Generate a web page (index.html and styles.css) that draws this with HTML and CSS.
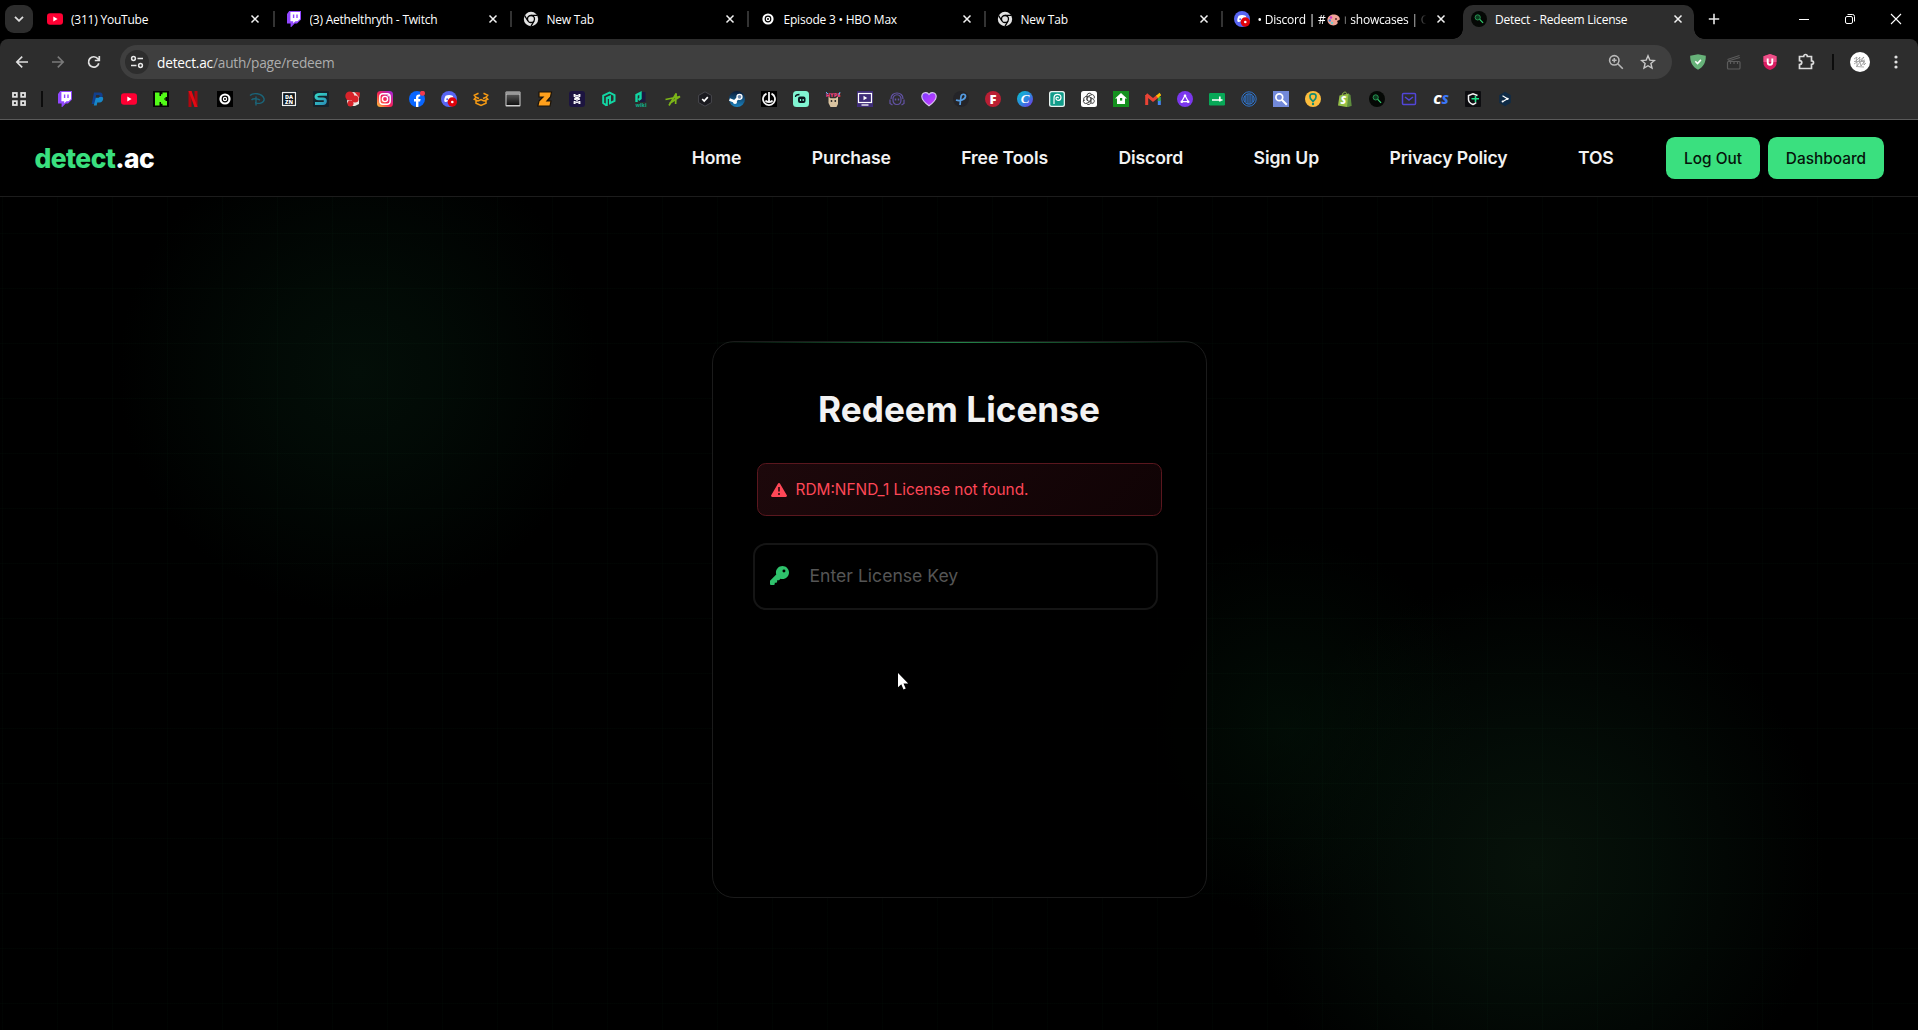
FILE: index.html
```html
<!DOCTYPE html>
<html lang="en">
<head>
    <meta charset="UTF-8">
    <meta name="viewport" content="width=device-width, initial-scale=1.0">
    <title>Detect - Redeem License</title>
    <link rel="stylesheet" href="styles.css">
</head>
<body>
    <!-- shared icons -->
    <svg class="sprite" width="0" height="0">
        <linearGradient id="g-insta" x1="0" y1="1" x2="1" y2="0"><stop offset="0" stop-color="#ffc93c"/><stop offset=".45" stop-color="#f9234f"/><stop offset="1" stop-color="#9b25e8"/></linearGradient>
        <linearGradient id="g-canva" x1="0" y1="0" x2="1" y2="1"><stop offset="0" stop-color="#06c3cc"/><stop offset=".55" stop-color="#2f86e0"/><stop offset="1" stop-color="#7d2ae8"/></linearGradient>
        <linearGradient id="g-heart" x1="0" y1="0" x2="1" y2="1"><stop offset="0" stop-color="#7a3cff"/><stop offset="1" stop-color="#d43cff"/></linearGradient>
        <linearGradient id="g-steam" x1="0" y1="0" x2="0" y2="1"><stop offset="0" stop-color="#0a1a36"/><stop offset="1" stop-color="#1a83c0"/></linearGradient>
        <linearGradient id="g-s" x1="0" y1="0" x2="1" y2="1"><stop offset="0" stop-color="#35d6c6"/><stop offset="1" stop-color="#2a8fb8"/></linearGradient>
        <linearGradient id="g-win" x1="0" y1="0" x2="0" y2="1"><stop offset="0" stop-color="#555"/><stop offset="1" stop-color="#111"/></linearGradient>
        <symbol id="i-x" viewBox="0 0 10 10"><path d="M1.5 1.5l7 7m0-7l-7 7" stroke="#f2f2f2" stroke-width="1.5" fill="none"/></symbol>
        <symbol id="i-youtube" viewBox="0 0 16 16"><rect y="2.2" width="16" height="11.6" rx="3" fill="#ff0033"/><path d="M6.3 5.6v4.8L10.6 8z" fill="#fff"/></symbol>
        <symbol id="i-twitch" viewBox="0 0 16 16"><path d="M3.2 0H15v8.5l-4 3.9H8.7L5.3 16H4.6v-3.4H1V3z" fill="#9146ff"/><path d="M4.4 1h9.6v7l-2.4 2.3H9.4l-2.2 2v-2H4.4z" fill="#fff"/><path d="M7.6 3.6v3.4m3.4-3.4v3.4" stroke="#9146ff" stroke-width="1.4"/></symbol>
        <symbol id="i-chrome" viewBox="0 0 16 16"><circle cx="8" cy="8" r="7.2" fill="#e3e3e3"/><circle cx="8" cy="8" r="3.5" fill="#e3e3e3" stroke="#000" stroke-width="1.3"/><path d="M8 4.3h6.4M4.9 10L1.6 4.5M11.1 10l-3.2 5.3" stroke="#000" stroke-width="1.3" fill="none"/></symbol>
        <symbol id="i-hbo" viewBox="0 0 16 16"><circle cx="8" cy="8" r="5.6" fill="#fff"/><circle cx="8" cy="8" r="2.8" fill="#fff" stroke="#000" stroke-width="1.200"/><circle cx="8" cy="8" r="1" fill="#000"/></symbol>
        <symbol id="i-discord" viewBox="0 0 16 16"><circle cx="8" cy="8" r="8" fill="#5865f2"/><path d="M4.6 4.8C6.6 3.8 9.6 3.8 11.6 4.8c1.2 2 1.5 4 1.3 5.4-1.6 1.2-2.4 1-2.8.4H6c-.5.7-1.5.7-2.7-.4-.2-1.6.2-3.6 1.3-5.4z" fill="#fff"/><circle cx="6.2" cy="8.2" r="1" fill="#5865f2"/><circle cx="11.3" cy="11" r="4.7" fill="#e0020a"/><circle cx="11.3" cy="11" r="1.3" fill="#fff"/></symbol>
        <symbol id="i-detect" viewBox="0 0 16 16"><circle cx="8" cy="8" r="8" fill="#050805"/><circle cx="6.7" cy="6.4" r="2.6" fill="#0c3b20" stroke="#2a9d57" stroke-width=".9"/><path d="M8.7 8.4l3.4 3.4" stroke="#35d673" stroke-width="1.2"/></symbol>
    </svg>

    <div class="tabstrip">
        <div class="tabsearch"><svg width="10" height="6"><path d="M1 .8l4 4 4-4" fill="none" stroke="#ddd" stroke-width="1.8"/></svg></div>
        <ul class="tabs">
            <li><svg class="fav"><use href="#i-youtube"/></svg><span class="name">(311) YouTube</span><svg class="close"><use href="#i-x"/></svg></li>
            <li><svg class="fav"><use href="#i-twitch"/></svg><span class="name">(3) Aethelthryth - Twitch</span><svg class="close"><use href="#i-x"/></svg></li>
            <li><svg class="fav"><use href="#i-chrome"/></svg><span class="name">New Tab</span><svg class="close"><use href="#i-x"/></svg></li>
            <li><svg class="fav"><use href="#i-hbo"/></svg><span class="name">Episode 3 • HBO Max</span><svg class="close"><use href="#i-x"/></svg></li>
            <li><svg class="fav"><use href="#i-chrome"/></svg><span class="name">New Tab</span><svg class="close"><use href="#i-x"/></svg></li>
            <li class="nosep"><svg class="fav"><use href="#i-discord"/></svg><span class="name fade">• Discord | #<svg class="palette" width="13" height="12" viewBox="0 0 13 12"><path d="M6.5.5C10 .5 12.800 2.600 12.800 5c0 2-2.600.8-2.600 2.600 1.600 1.800-.7 3.800-3.700 3.800C3 11.400.4 9 .4 6S3 .5 6.500.5z" fill="#f2a497"/><circle cx="4" cy="3.500" r="1.200" fill="#c93cc8"/><circle cx="2.800" cy="6.500" r="1.200" fill="#3f8de0"/><circle cx="5" cy="9" r="1.200" fill="#7cc"/><circle cx="9" cy="5" r="1" fill="#5a2a2a"/></svg><small>︱</small>showcases | C</span><svg class="close"><use href="#i-x"/></svg></li>
            <li class="active"><svg class="fav"><use href="#i-detect"/></svg><span class="name">Detect - Redeem License</span><svg class="close"><use href="#i-x"/></svg></li>
        </ul>
        <svg class="newtab" width="12" height="12"><path d="M6 .8v10.400M.8 6h10.400" stroke="#e8e8e8" stroke-width="1.600"/></svg>
        <div class="winbtns">
            <svg width="12" height="12"><path d="M1 6.500h10" stroke="#fff"/></svg>
            <svg width="12" height="12" fill="none" stroke="#fff"><rect x="1.500" y="3.500" width="7" height="7" rx="1.500"/><path d="M3.500 1.500h5a2 2 0 0 1 2 2v5"/></svg>
            <svg width="12" height="12"><path d="M1 1l10 10M11 1L1 11" stroke="#fff" stroke-width="1.100"/></svg>
        </div>
    </div>

    <div class="toolbar">
        <div class="arrows">
            <svg width="16" height="16" fill="none" stroke="#e0e0e0" stroke-width="1.600"><path d="M14 8H3M8.200 2.600L2.800 8l5.400 5.400"/></svg>
            <svg width="16" height="16" fill="none" stroke="#7a7a7a" stroke-width="1.600"><path d="M2 8h11M7.800 2.600L13.200 8l-5.400 5.400"/></svg>
            <svg width="16" height="16" fill="none" stroke="#e0e0e0" stroke-width="1.700"><path d="M12.800 9.200A5.200 5.200 0 1 1 11.900 4.800L13 6M13.300 2v4.500H8.800"/></svg>
        </div>
        <div class="omnibox">
            <div class="siteinfo"><svg width="14" height="14" fill="none" stroke="#e8e8e8" stroke-width="1.500"><circle cx="3.500" cy="3.500" r="1.900"/><path d="M7.500 3.500H13M1 10.500h5.500"/><circle cx="10.500" cy="10.500" r="1.900"/></svg></div>
            <p class="url">detect.ac<span>/auth/page/redeem</span></p>
            <svg class="zoomicon" width="16" height="16" fill="none" stroke="#b8b8b8" stroke-width="1.600"><circle cx="6.300" cy="6.300" r="4.700"/><path d="M9.800 9.800l5 5M6.300 4v4.600M4 6.300h4.600"/></svg>
            <svg width="16" height="16" fill="none" stroke="#c8c8c8" stroke-width="1.400"><path d="M8 1.800l1.800 4.300 4.600.4-3.500 3 1.100 4.600L8 11.700l-4 2.400 1.100-4.600-3.500-3 4.600-.4z"/></svg>
        </div>
        <div class="exts">
            <svg width="16" height="16"><path d="M8 .2l7.800 1.600c.2 6-2 11-7.800 14C2.200 12.800 0 7.800.2 1.800z" fill="#67b279"/><path d="M5.300 7.300l2.200 2.200 3.400-3.600" fill="none" stroke="#fff" stroke-width="1.600"/></svg>
            <svg width="16" height="16" fill="none" stroke="#5c5c5c" stroke-width="1.200"><rect x="1.500" y="7.500" width="12.500" height="7.500" rx="1"/><path d="M1.500 5.500L13.500 1.500M2 7l12-3.500M4.500 8v2M8 8v2M11.500 8v2"/></svg>
            <svg width="16" height="16"><path d="M8 0l6.500 2.300v7.200c0 3-3 5.300-6.500 6.500-3.500-1.200-6.500-3.500-6.500-6.500V2.300z" fill="#d81b60"/><path d="M8 0l6.500 2.300V8h-13V2.300z" fill="#ee4f88"/><path d="M5.700 4.500v3.700c0 3.400 4.600 3.400 4.600 0V4.500" fill="none" stroke="#fff" stroke-width="1.900"/></svg>
            <svg width="18" height="18" fill="none" stroke="#dcdcdc" stroke-width="1.700"><path d="M2.500 3.500h4.200c0-2.700 3.600-2.700 3.600 0h4.200v4.300c2.700 0 2.700 3.600 0 3.600v4.100h-12v-3.900c3 0 3-4 0-4z"/></svg>
            <i class="bar"></i>
            <svg width="20" height="20"><circle cx="10" cy="10" r="10" fill="#fff"/><path d="M4 7l3-2-1 4 4-4-1 4 5-4-3 4 4-1M4 12l3-2 0 4 3-4 1 4 3-4 0 3 2-2M4 9.500h11M6 14.500l8 .5" fill="none" stroke="#888" stroke-width=".7"/></svg>
            <svg class="dots" width="4" height="14" fill="#e0e0e0"><circle cx="2" cy="2" r="1.600"/><circle cx="2" cy="7" r="1.600"/><circle cx="2" cy="12" r="1.600"/></svg>
        </div>
    </div>

    <div class="bookmarks">
        <svg class="apps" fill="none" stroke="#e3e3e3" stroke-width="1.800"><rect x="2" y="2" width="3.800" height="3.800"/><rect x="10.200" y="2" width="3.800" height="3.800"/><rect x="2" y="10.200" width="3.800" height="3.800"/><rect x="10.200" y="10.200" width="3.800" height="3.800"/></svg>
        <i class="bar"></i>
        <svg><use href="#i-twitch"/></svg>
        <svg><path d="M5 1.500h5.500c3 0 3.600 2 2.900 4.300C12.700 8.500 11 9.500 8.500 9.500H6.700L6 13H2.700z" fill="#123f8c"/><path d="M7 6h6.500c1 1.200.8 2.200.2 3.500-.8 1.800-2.300 2-4.600 2H8.300l-.6 3H4.800z" fill="#1591d8" opacity=".9"/><path d="M7.200 4h2.500c1.500 0 1.500 2.800-.8 2.800H6.700z" fill="#2d2d2d"/></svg>
        <svg><use href="#i-youtube"/></svg>
        <svg><rect width="16" height="16" fill="#050505"/><path d="M2 1.500h4.500V5H8V3.300h1.500V1.500H14V6h-1.500v1.500H11v1h1.500V10H14v4.500H9.500v-1.800H8V11H6.500v3.500H2z" fill="#53fc18"/></svg>
        <svg><path d="M3.500 0h3v16h-3zM9.500 0h3v16h-3z" fill="#b1060f"/><path d="M3.500 0h3l6 16h-3z" fill="#e50914"/></svg>
        <svg><rect width="16" height="16" fill="#000"/><use href="#i-hbo" width="16" height="16"/></svg>
        <svg fill="none" stroke="#1b6478" stroke-width="1.400"><path d="M1 4.500C4 1.500 13 2 15 7.500c1 4.500-5 5.500-9 4.500M7 5.500v9M2.500 9c1.500-1.800 6-1.500 8.500.2"/></svg>
        <svg><rect width="16" height="16" fill="#0c161c"/><rect x="1.500" y="1.500" width="13" height="13" fill="none" stroke="#f0f0f0" stroke-width="1.300"/><text x="8" y="7.600" class="ic" font-size="5.500" fill="#fff">DA</text><text x="8" y="13" class="ic" font-size="5.500" fill="#fff">ZN</text></svg>
        <svg><rect width="16" height="16" rx="1" fill="#16232c"/><path d="M14 3.300H6.500c-4.600 0-4.600 4.500-.8 4.500h4.300c3.500 0 3 4.700 0 4.700H2" fill="none" stroke="url(#g-s)" stroke-width="2.800"/></svg>
        <svg><path d="M3 2l5-1 6 1v11l-4 2H4l-2-4z" fill="#ece6e0"/><circle cx="4.800" cy="5" r="4.500" fill="#d8232a"/><circle cx="10" cy="8" r="3.600" fill="#d8232a"/><circle cx="5.500" cy="12.500" r="3" fill="#d8232a"/><path d="M9.500 1L15 1.500 14.500 7z" fill="#d8232a"/></svg>
        <svg><rect width="16" height="16" rx="3.500" fill="url(#g-insta)"/><g fill="none" stroke="#fff" stroke-width="1.400"><rect x="2.800" y="2.800" width="10.400" height="10.400" rx="3"/><circle cx="8" cy="8" r="2.600"/></g><circle cx="11.200" cy="4.800" r=".8" fill="#fff"/></svg>
        <svg><circle cx="8" cy="8" r="8" fill="#0866ff"/><path d="M7 16v-5.600H5V8h2V6.600c0-2.600 1.600-3.600 4.200-3.100v2C9.800 5.400 9.400 5.700 9.400 6.700V8h2.200l-.5 2.400H9.400V16z" fill="#fff"/><circle cx="13.500" cy="2.300" r="2.500" fill="#f23a4c"/></svg>
        <svg><use href="#i-discord"/></svg>
        <!-- open box -->
        <svg fill="none" stroke="#f59a14" stroke-width="1.500"><path d="M5.500 2.200L1.300 4.200 3 6.200 1.200 8.300 5 10M10.500 2.200l4.200 2L13 6.200l1.800 2.100L11 10M3 9.500v2.700l5 2.300 5-2.300V9.500M3 6.200l3 1.300M13 6.200l-3 1.300M5 10l3-1.500L11 10"/></svg>
        <svg><rect x=".5" y=".5" width="15" height="15" rx="1" fill="#d0d0d0"/><rect x="1" y="1" width="14" height="2" fill="#999"/><rect x="1.500" y="3.500" width="13" height="10.500" fill="url(#g-win)"/></svg>
        <svg><path d="M2 1h12.500l-1 5-3.500 4h4l-1 5H.8l1.200-5 4-4H2z" fill="#ffa01c" stroke="#1a1208" stroke-width="1.200"/></svg>
        <svg><rect width="16" height="16" rx="3" fill="#1c1440"/><g fill="none" stroke="#fff" stroke-width="1.200"><path d="M5.200 3v2.300l5.600 3.200M10.800 3v2.300L5.200 8.500M5.200 13v-2.300l5.600-3.200M10.800 13v-2.300L5.200 7.500M5.500 3.500L8 5l2.500-1.500M5.500 12.500L8 11l2.500 1.500"/></g></svg>
        <svg fill="none" stroke="#12d6a3" stroke-width="2"><path d="M5.500 14.500L2.200 12V4.700L8.500 1.500l5 2.500v6L9 12.200V5.500L5.800 7v8"/></svg>
        <svg><rect x="6.500" y="1" width="6" height="10" fill="#1c1840"/><path d="M3.500 11V4L7.500 2v5.500L5.500 9" fill="none" stroke="#12d6a3" stroke-width="2.400"/><text x="8" y="15.600" class="ic" font-size="5" fill="#12a080">wiki</text></svg>
        <svg fill="none" stroke="#7cb518" stroke-width="1.700"><path d="M.5 8.500L15 5.500 4.500 12.500M4 14.500L11.200 2.500l-.6 10.500"/></svg>
        <svg><path d="M8 .8l6.400 3.600v7.200L8 15.200l-6.400-3.600V4.400z" fill="#1b1b20" stroke="#48484e"/><path d="M5.200 8l2 2 3.600-3.800" fill="none" stroke="#fff" stroke-width="1.700"/></svg>
        <svg><circle cx="8" cy="8" r="8" fill="url(#g-steam)"/><path d="M.5 8.500L5.500 10.500 9 7" fill="none" stroke="#fff" stroke-width="2.600"/><circle cx="10.500" cy="5.800" r="2.500" fill="#6f8db0" stroke="#fff" stroke-width="1.300"/><circle cx="6" cy="11" r="2" fill="#fff"/></svg>
        <svg><rect width="16" height="16" fill="#000"/><path d="M5.500 2.600A6 6 0 1 0 10.500 2.600" fill="none" stroke="#f4f4f4" stroke-width="1.800"/><path d="M8 1v11M4.500 9.500c1 2 6 2 7 0" fill="none" stroke="#f4f4f4" stroke-width="1.800"/></svg>
        <svg><rect width="16" height="16" rx="3.500" fill="#80f5d2"/><rect x="5" y="5.500" width="7.500" height="6.500" rx="2" fill="#09161d"/><path d="M2.500 6c0-2 2-2.500 4-2.500" stroke="#09161d" stroke-width="1.300" fill="none"/><path d="M7.500 8v2M10.200 8v2" stroke="#80f5d2" stroke-width="1.200"/></svg>
        <svg><text x="8" y="5.500" class="ic" font-size="5.500" fill="#e8407c">HYPE</text><path d="M3.500 5.500l2 1.700h5l2.500-1.700V13l-1.500 3h-6L3.500 12z" fill="#d9c3a0"/><circle cx="6.500" cy="10" r=".9" fill="#222"/><circle cx="10.300" cy="10" r=".9" fill="#222"/><path d="M1 1l2 2M15 1l-1 3" stroke="#5db8f0"/></svg>
        <svg><rect width="16" height="16" fill="#3f2d78"/><rect x="1.500" y="2.500" width="13" height="9" fill="none" stroke="#fff" stroke-width="1.200"/><path d="M6.500 4.800v4.400L10.200 7z" fill="#fff"/><path d="M4.500 14h7" stroke="#fff" stroke-width="1.300"/></svg>
        <svg fill="none" stroke="#6353a6" stroke-width="1.200"><path d="M2 8C1.500 0 14.500 0 14 8M4 9c-1-7 9-7 8 0 0 6-8 6-8 0zM1 8.500v4l2.500 1.500M15 8.500v4l-2.500 1.500"/><path d="M6.500 7.500v2M9.500 7.500v2" stroke-width="1.500"/></svg>
        <svg><path d="M8 14.800C3.500 11.500.8 9 .8 5.500.8 1.500 6 .3 8 3.500 10 .3 15.200 1.500 15.200 5.500c0 3.500-2.700 6-7.200 9.300z" fill="url(#g-heart)" stroke="#d8c8f0" stroke-width="1.100"/></svg>
        <svg><circle cx="8" cy="8" r="8" fill="#242428"/><path d="M3 9c4 1.500 9-.5 9.500-3.500.3-3-4-3-4.500 0L7 14" fill="none" stroke="#549be0" stroke-width="1.700"/></svg>
        <svg><circle cx="8" cy="8" r="8" fill="#ba1f33"/><text x="8" y="12.800" class="ic" font-size="13" fill="#fff">F</text></svg>
        <svg><circle cx="8" cy="8" r="8" fill="url(#g-canva)"/><text x="8" y="12" class="ic script" font-size="13" fill="#fff">C</text></svg>
        <svg><rect width="16" height="16" rx="2.500" fill="#e8f3f0"/><rect x="1.300" y="1.300" width="13.400" height="13.400" rx="1.500" fill="#119c8a"/><path d="M5 13V7c0-5 7-4.500 7-.8 0 4-5 4-5 1 0-1.500 2.500-1.500 2.500 0" fill="none" stroke="#fff" stroke-width="1.200"/></svg>
        <svg><rect width="16" height="16" rx="2.500" fill="#fff"/><g fill="none" stroke="#444" stroke-width="1"><path d="M6 6V4.500a2.500 2.500 0 0 1 4.800-.8M6 6l4-2.200a2.500 2.500 0 0 1 3 3.700M10 6.800V11a2.500 2.500 0 0 1-4.500 1.500M10 10l-4 2.200a2.500 2.500 0 0 1-3.300-3.500M6 9.200V5L3.800 6a2.500 2.500 0 0 0-.2 4M10 6.800l2.500 1.500a2.500 2.500 0 0 1-.5 4L10 12M6 6.800L8 5.600l2 1.200v2.400l-2 1.200-2-1.200z"/></g></svg>
        <svg><rect width="16" height="16" fill="#15901f"/><path d="M8 2l6 5.500h-2V13H4V7.500H2z" fill="#fff"/><rect x="7" y="7" width="2.200" height="2.600" fill="#15901f"/></svg>
        <svg><path d="M1.700 14V4" stroke="#ea4335" stroke-width="3"/><path d="M14.300 14V9" stroke="#4285f4" stroke-width="3"/><path d="M14.300 10V6" stroke="#34a853" stroke-width="3"/><path d="M1.200 3.500L8 9l5-4" fill="none" stroke="#ea4335" stroke-width="3"/><path d="M12 5.800L15.500 3" stroke="#fbbc04" stroke-width="3"/></svg>
        <svg><circle cx="8" cy="8" r="8" fill="#7b37ee"/><path d="M8 4.500l3.300 6.200H4.700z" fill="none" stroke="#fff" stroke-width="1.200"/><g fill="#fff"><circle cx="8" cy="4.800" r="1.300"/><circle cx="4.800" cy="10.700" r="1.300"/><circle cx="11.200" cy="10.700" r="1.300"/></g></svg>
        <svg><rect y="2" width="16" height="12.500" rx="1.200" fill="#07a857"/><path d="M3 9h10.500M10.800 5.500v5" stroke="#fff" stroke-width="1.700"/></svg>
        <svg fill="none" stroke="#2f74cc" stroke-width="1"><circle cx="8" cy="8" r="7.200"/><circle cx="8" cy="8" r="5.200"/><path d="M4.200 5v6M6.100 3v10M8 3v10M9.900 3v10M11.800 5v6"/></svg>
        <svg><rect width="16" height="16" fill="#7289da"/><circle cx="6.300" cy="6.300" r="3.400" fill="none" stroke="#fff" stroke-width="1.700"/><path d="M8.800 8.800l5 5" stroke="#fff" stroke-width="2"/></svg>
        <svg><circle cx="8" cy="8" r="8" fill="#fdbd3d"/><path d="M8 10.500L5.400 7.500C4 3.500 6 2.800 8 2.800s4 .7 2.600 4.700z" fill="none" stroke="#138a72" stroke-width="1.700"/><circle cx="8" cy="13" r="1.200" fill="#138a72"/></svg>
        <svg><path d="M2.500 4.500L12 2.500l1.800 12.300L9.500 16 1 14.500z" fill="#95bf47"/><path d="M11.500 3l2 1 1.200 11L10 16z" fill="#5e8e3e"/><path d="M5 4.500C5.500 1 9.500-.5 9.800 3.500" fill="none" stroke="#95bf47"/><text x="6.500" y="12.800" class="ic it" font-size="10.500" fill="#fff">S</text></svg>
        <svg><use href="#i-detect"/></svg>
        <svg fill="none" stroke="#5246d8" stroke-width="1.500"><rect x="1.500" y="2.500" width="13" height="11" rx="1"/><path d="M4 6l4 3 4-3"/></svg>
        <svg><text x="4.300" y="12.800" class="ic it" font-size="13" fill="#fff">C</text><text x="12" y="12.800" class="ic it" font-size="13" fill="#3b76f6">S</text></svg>
        <svg><rect width="16" height="16" rx="1" fill="#0d0d10"/><path d="M12.500 4.500L8 2.800 3.500 4.500v4c0 2.500 2 4 4.500 5 1.500-.6 2.500-1.300 3.200-2" fill="none" stroke="#f4f4f4" stroke-width="1.500"/><path d="M6.500 7.800H14M10.500 5v6" stroke="#20e58c" stroke-width="1.600"/></svg>
        <svg><path d="M8 .8l5.800 3.500v7.400L8 15.200l-5.800-3.500V4.300z" fill="#0f2b46"/><path d="M5.500 4.800L10.500 7.800 5.800 10.500" fill="none" stroke="#fff" stroke-width="1.200"/><circle cx="10.600" cy="7.800" r="1.100" fill="#fff"/><circle cx="5.600" cy="10.600" r="1" fill="#fff"/></svg>
    </div>

    <header>
        <a class="logo"><span>detect</span>.ac</a>
        <nav>
            <a>Home</a>
            <a>Purchase</a>
            <a>Free Tools</a>
            <a>Discord</a>
            <a>Sign Up</a>
            <a>Privacy Policy</a>
            <a>TOS</a>
        </nav>
        <div class="userbtns">
            <button>Log Out</button>
            <button>Dashboard</button>
        </div>
    </header>

    <main>
        <div class="card">
            <h1>Redeem License</h1>
            <div class="alert">
                <svg width="16" height="14" viewBox="0 0 16 14"><path d="M8 0c.5 0 .9.300 1.100.7l6.700 11.500c.5.800-.1 1.800-1.100 1.800H1.300c-1 0-1.600-1-1.100-1.800L6.900.7C7.100.300 7.500 0 8 0z" fill="#ff4757"/><path d="M8 4v4.600" stroke="#1b0709" stroke-width="1.500"/><circle cx="8" cy="11" r="1" fill="#1b0709"/></svg>
                <span>RDM:NFND_1 License not found.</span>
            </div>
            <div class="field">
                <svg width="19" height="19" viewBox="0 0 512 512"><path d="M336 352c97.200 0 176-78.800 176-176S433.200 0 336 0S160 78.800 160 176c0 18.700 2.900 36.800 8.300 53.700L7 391c-4.500 4.500-7 10.600-7 17v80c0 13.300 10.700 24 24 24h80c13.300 0 24-10.700 24-24v-40h40c13.300 0 24-10.700 24-24v-40h40c6.400 0 12.500-2.500 17-7l33.300-33.300c16.900 5.400 35 8.300 53.700 8.300zM376 96a40 40 0 1 1 0 80 40 40 0 1 1 0-80z" fill="#2fc26c"/></svg>
                <input type="text" placeholder="Enter License Key">
            </div>
        </div>
        <svg class="cursor" width="12" height="18"><path d="M0 0v14.200l3.300-3 2.200 5.200 2.200-.9-2.200-5h4.700z" fill="#fff"/></svg>
    </main>
</body>
</html>
```
FILE: styles.css
```css
*{
    margin: 0;
    padding: 0;
    box-sizing: border-box;
}
li{
    list-style: none;
}
body{
    display: flex;
    flex-direction: column;
    height: 1030px;
    overflow: hidden;
    background: #000;
    font-family: Inter, "Liberation Sans", sans-serif;
    color: #fff;
}
svg{
    display: block;
    flex: none;
}
.sprite{
    position: absolute;
}

/* tab strip */
.tabstrip{
    display: flex;
    height: 39px;
    padding-top: 5px;
    padding-left: 5px;
    font: 12px "Open Sans", "Noto Sans", sans-serif;
}
.tabsearch{
    display: flex;
    align-items: center;
    justify-content: center;
    width: 28px;
    height: 28px;
    margin-right: 4px;
    border-radius: 9px;
    background: #2d2d2d;
}
.tabs{
    display: flex;
}
.tabs li{
    display: flex;
    align-items: center;
    position: relative;
    width: 237px;
    height: 34px;
    padding: 0 13px 6px 11.5px;
}
.tabs li:first-child{
    padding-left: 10px;
    padding-right: 14px;
}
.tabs li::after{
    content: "";
    position: absolute;
    right: -1px;
    top: 6px;
    width: 2px;
    height: 16px;
    background: #333;
}
.tabs .nosep::after{
    display: none;
}
.fav{
    width: 16px;
    height: 16px;
    margin-right: 8px;
}
.name{
    display: flex;
    align-items: center;
    flex: 1;
    overflow: hidden;
    white-space: pre;
    letter-spacing: -.22px;
    line-height: 18px;
    padding-top: 1px;
}
.name small{
    width: 13px;
    font-size: 9px;
    text-align: center;
}
.palette{
    margin-left: 1px;
}
.fade{
    margin-right: 8px;
    -webkit-mask-image: linear-gradient(90deg, #000 90%, transparent 99%);
    mask-image: linear-gradient(90deg, #000 90%, transparent 99%);
}
.close{
    width: 10px;
    height: 10px;
}
.tabs .active{
    padding-left: 12px;
}
.tabs .active::before{
    content: "";
    position: absolute;
    z-index: -1;
    left: -6px;
    right: -8px;
    bottom: 0;
    height: 10px;
    background:
        radial-gradient(circle at 0 0, transparent 9.5px, #2d2d2d 10px) left/10px 10px no-repeat,
        radial-gradient(circle at 100% 0, transparent 9.5px, #2d2d2d 10px) right/10px 10px no-repeat;
}
.tabs .active::after{
    z-index: -1;
    left: 4px;
    right: 2px;
    top: 0;
    width: auto;
    height: 34px;
    border-radius: 10px 10px 0 0;
    background: #2d2d2d;
}
.newtab{
    margin: 8px 0 0 12px;
}
.winbtns{
    display: flex;
    gap: 34px;
    margin: 8px 16px 0 auto;
}

/* address bar */
.toolbar{
    display: flex;
    align-items: center;
    height: 46px;
    background: #2d2d2d;
    border-radius: 8px 8px 0 0;
}
.arrows{
    display: flex;
    gap: 20px;
    width: 120px;
    padding-left: 14px;
}
.omnibox{
    display: flex;
    align-items: center;
    width: 1552px;
    height: 34px;
    padding: 0 16px 0 5px;
    border-radius: 17px;
    background: #3f3f3f;
}
.siteinfo{
    display: flex;
    align-items: center;
    justify-content: center;
    width: 24px;
    height: 24px;
    margin-right: 8px;
    border-radius: 50%;
    background: #2d2d2d;
}
.url{
    flex: 1;
    font: 13.7px "Open Sans", "Noto Sans", sans-serif;
    letter-spacing: -.21px;
}
.url span{
    color: #adadad;
}
.zoomicon{
    margin-right: 16px;
}
.exts{
    display: flex;
    align-items: center;
    margin-left: 18px;
    gap: 20px;
}
.exts svg:nth-child(4){
    margin-left: -1px;
    margin-right: -3px;
}
.bar{
    width: 2px;
    height: 16px;
    background: #0c0c0c;
}
.exts .bar{
    margin-right: -4px;
}
.dots{
    margin-left: 4px;
}

/* bookmarks bar */
.bookmarks{
    display: flex;
    align-items: center;
    gap: 16px;
    height: 35px;
    padding: 0 0 7px 11px;
    border-bottom: 1px solid #5a5a5a;
    background: #2d2d2d;
}
.bookmarks svg{
    width: 16px;
    height: 16px;
    overflow: hidden;
}
.bookmarks .bar{
    margin: 0 -2px;
}
.ic{
    font-family: "Open Sans", sans-serif;
    font-weight: 800;
    text-anchor: middle;
}
.it{
    font-style: italic;
}
.script{
    font-family: "Liberation Serif", serif;
    font-style: italic;
}

/* site header */
header{
    display: flex;
    align-items: center;
    height: 77px;
    padding: 0 34px 0 34.5px;
    border-bottom: 1px solid #1c1c1c;
    background: #000;
}
.logo{
    font-size: 26.4px;
    font-weight: 800;
    letter-spacing: -.55px;
}
.logo span{
    color: #3ae07f;
}
nav{
    display: flex;
    gap: 70.4px;
    margin-left: auto;
    margin-right: 52.5px;
    padding-bottom: 1px;
    font-size: 17.6px;
    font-weight: 600;
    letter-spacing: -.1px;
    color: #f2f2f2;
}
.userbtns{
    display: flex;
    gap: 8px;
}
.userbtns button{
    height: 42px;
    padding: 0 17.9px;
    border: none;
    border-radius: 8.8px;
    background: #3ae07f;
    color: #06130b;
    font: 500 15.4px Inter, sans-serif;
}

main{
    flex: 1;
    position: relative;
    padding-top: 144px;
    background:
        linear-gradient(rgba(58, 224, 127, .02) 1px, transparent 1px) 2px 36px/55px 55px,
        linear-gradient(90deg, rgba(58, 224, 127, .02) 1px, transparent 1px) 2px 36px/55px 55px,
        radial-gradient(circle at 358px 175px, rgba(3, 14, 8, 1), rgba(2, 11, 6, .9) 90px, transparent 240px),
        radial-gradient(circle at 1285px 528px, rgba(3, 20, 9, .6), transparent 190px),
        radial-gradient(circle at 1535px 668px, rgba(7, 18, 10, 1), rgba(4, 14, 8, .85) 120px, transparent 290px),
        #000;
}
.card{
    position: relative;
    width: 495px;
    height: 557px;
    margin: 0 auto;
    padding: 44px;
    border: 1px solid #1b1b1b;
    border-radius: 22px;
    background: rgba(0, 0, 0, .8);
}
/* green highlight along the top edge */
.card::before{
    content: "";
    position: absolute;
    top: 0;
    left: 0;
    right: 0;
    height: 1px;
    background: linear-gradient(90deg, transparent, #238449, transparent);
}
h1{
    margin-bottom: 31px;
    font-size: 35.2px;
    font-weight: 700;
    line-height: 46px;
    text-align: center;
    color: #f2f2f2;
}
.alert{
    display: flex;
    align-items: center;
    gap: 9px;
    height: 53px;
    padding-left: 13px;
    border: 1px solid #5a171e;
    border-radius: 8.8px;
    background: linear-gradient(135deg, #1d080b, #100305);
    font-size: 15.4px;
    color: #ff4757;
}
.field{
    display: flex;
    align-items: center;
    height: 67px;
    margin: 27px 4px 0 -4px;
    padding: 0 0 2px 15px;
    border: 2px solid #151515;
    border-radius: 13px;
    background: #000;
}
.field input{
    flex: 1;
    margin-left: 21px;
    border: none;
    outline: none;
    background: none;
    font: 17.6px Inter, sans-serif;
}
.field input::placeholder{
    color: #555;
}
.cursor{
    position: absolute;
    left: 898px;
    top: 476px;
}
```
